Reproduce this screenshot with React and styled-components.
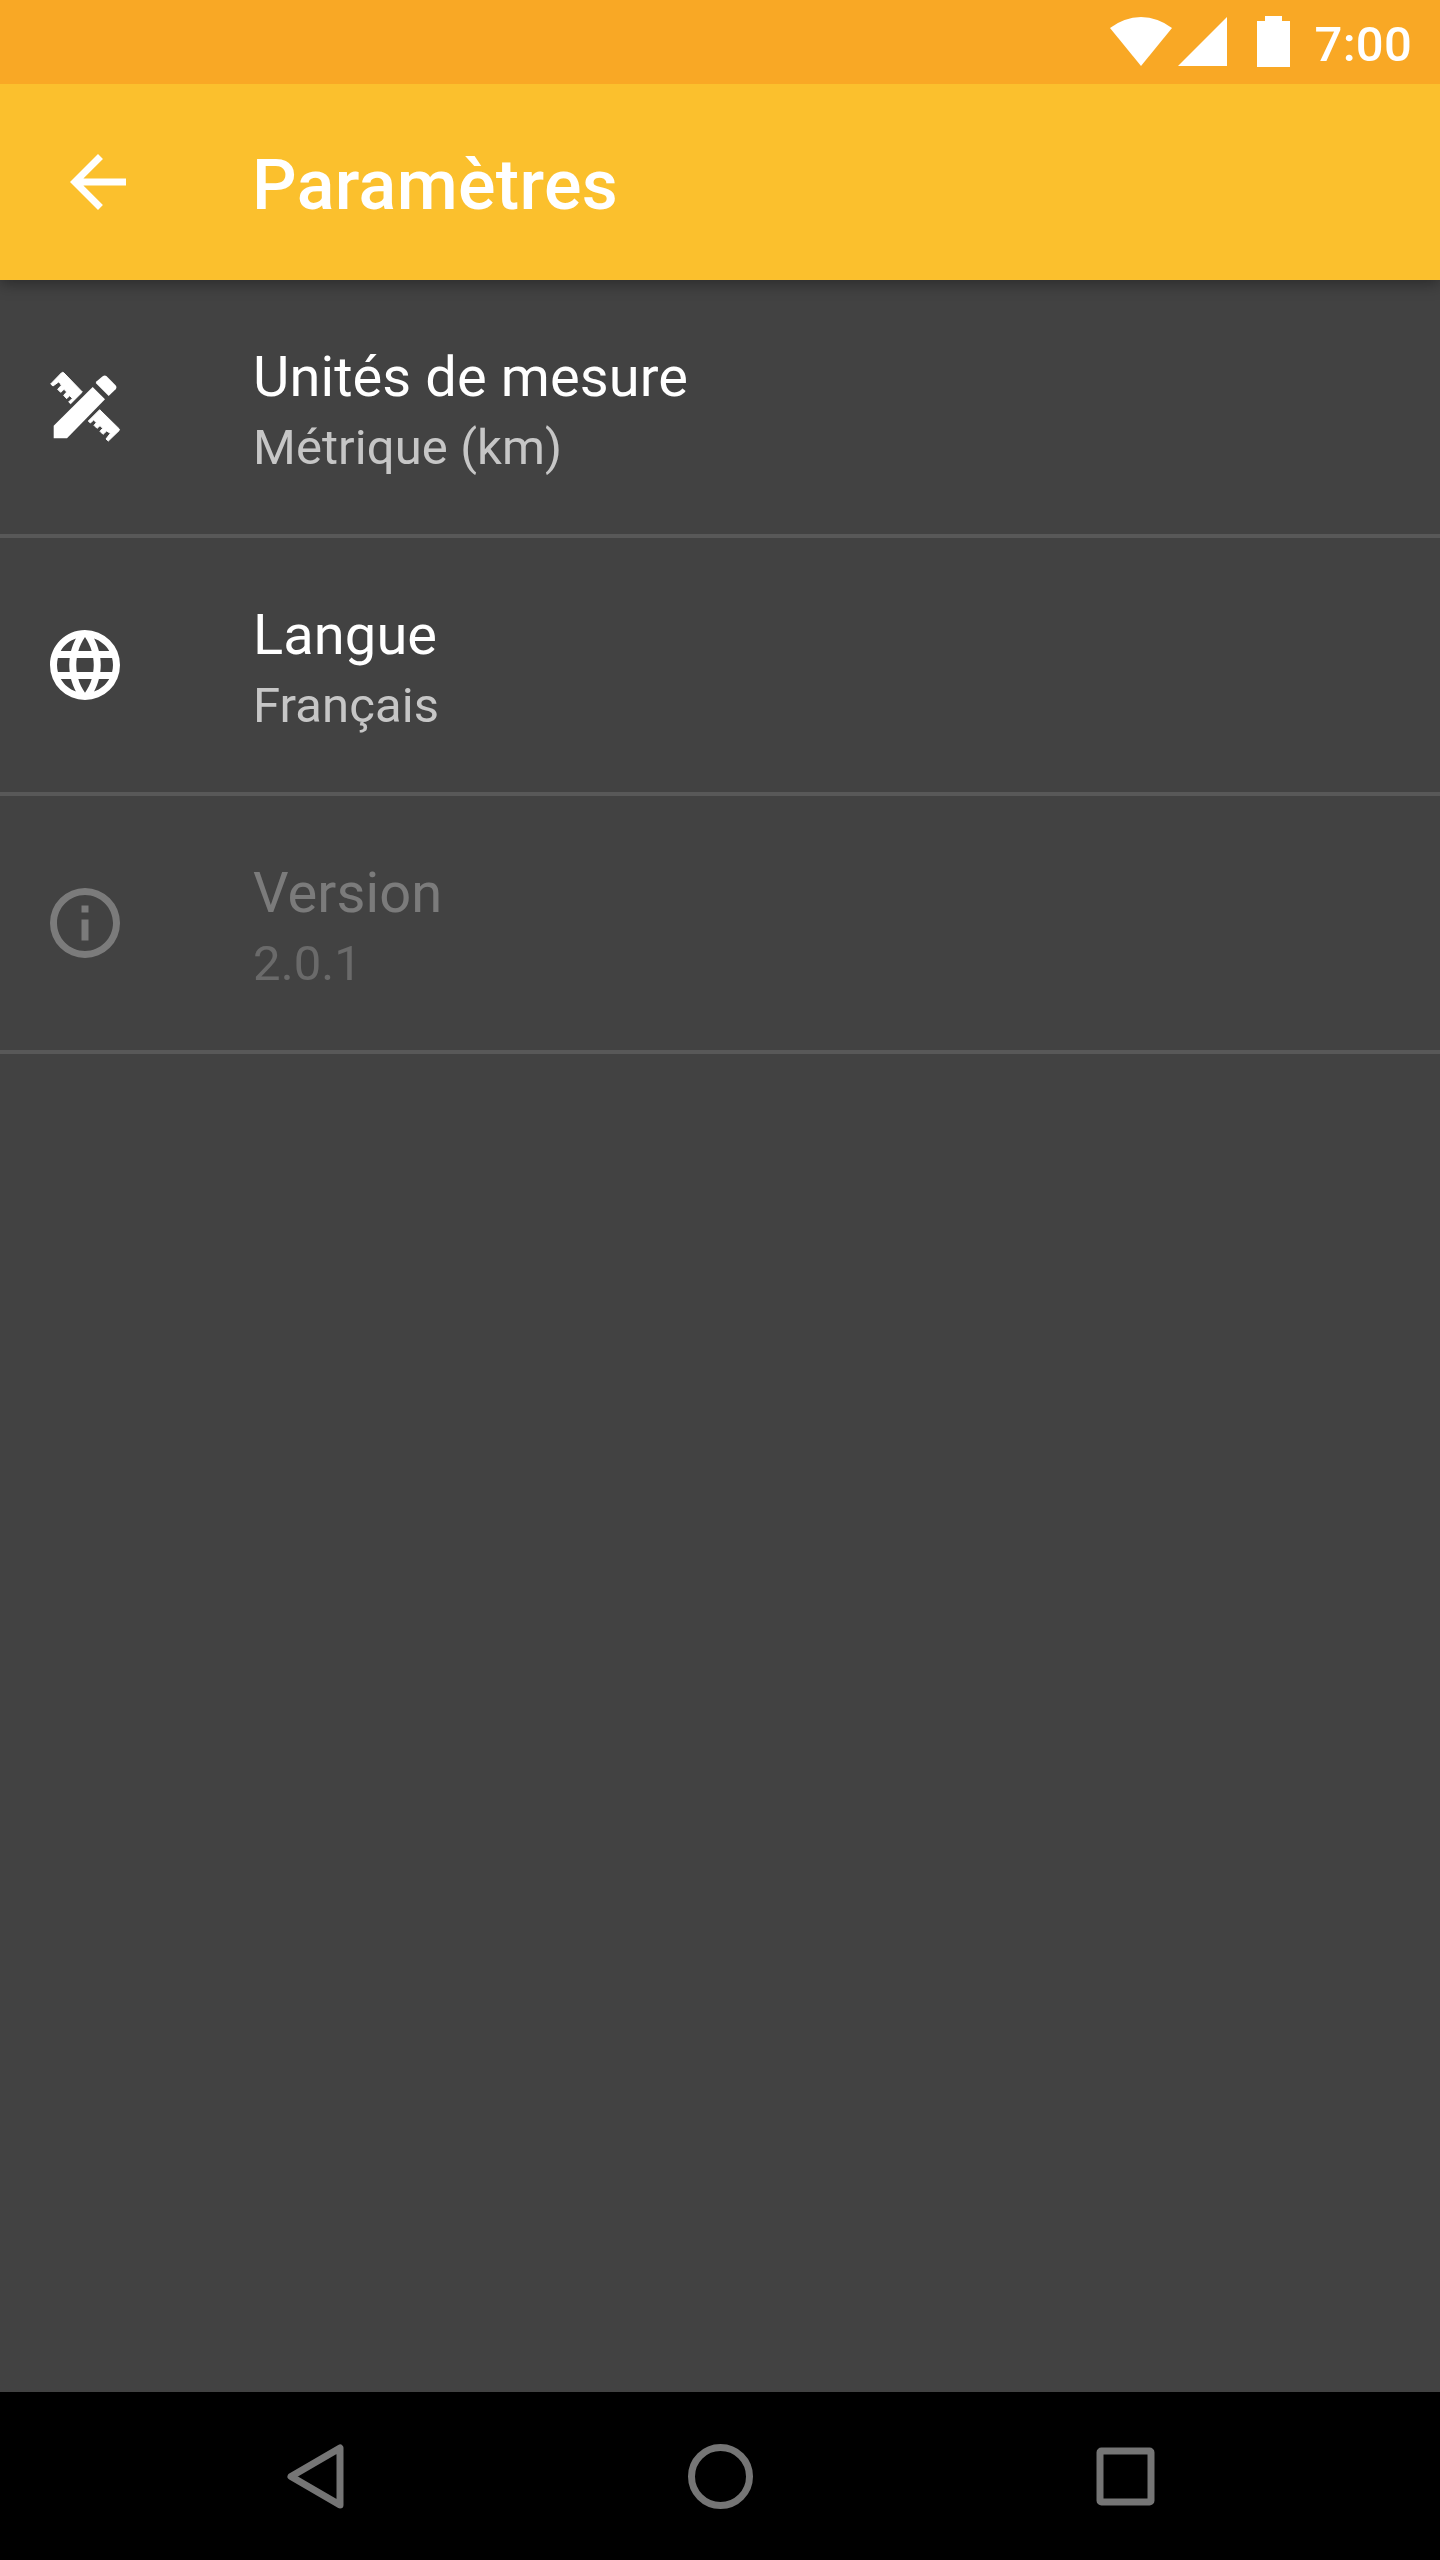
import React from "react";
import styled, { createGlobalStyle } from "styled-components";

const GlobalStyle = createGlobalStyle`
  body {
    margin: 0;
    background: #424242;
    font-family: Roboto, "Liberation Sans", sans-serif;
  }
`;

const Screen = styled.div`
  display: flex;
  flex-direction: column;
  width: 1440px;
  height: 2560px;
  overflow: hidden;
  background: #424242;
  color: #fff;
`;

const StatusBar = styled.header`
  display: flex;
  justify-content: flex-end;
  align-items: center;
  height: 84px;
  flex: none;
  padding-right: 28px;
  box-sizing: border-box;
  background: #f9a825;
  z-index: 2;
`;

const StatusIcons = styled.svg`
  display: block;
  width: 182px;
  height: 84px;
  margin-right: 24px;
  fill: #fff;
`;

const Clock = styled.time`
  font-size: 49px;
  line-height: 56px;
  font-weight: 500;
  padding-top: 5px;
  letter-spacing: 0.25px;
`;

const AppBar = styled.div`
  display: flex;
  align-items: center;
  height: 196px;
  flex: none;
  box-sizing: border-box;
  padding-left: 56px;
  background: #fbc02d;
  box-shadow: 0 4px 14px rgba(0, 0, 0, 0.35);
  z-index: 1;
`;

const BackButton = styled.button`
  width: 84px;
  height: 84px;
  padding: 0;
  border: 0;
  background: none;
  margin-right: 112px;
`;

const Icon = styled.svg`
  display: block;
  width: 84px;
  height: 84px;
  flex: none;
  fill: #fff;
`;

const Title = styled.h1`
  margin: 0;
  padding-top: 6px;
  font-size: 70px;
  line-height: 82px;
  font-weight: 500;
  letter-spacing: 0.35px;
`;

const List = styled.main`
  flex: 1;
`;

const Row = styled.section`
  display: flex;
  align-items: center;
  height: 258px;
  box-sizing: border-box;
  padding-left: 43px;
  border-bottom: 4px solid #585858;

  ${Icon} {
    margin-right: 125px;
    opacity: ${(p) => (p.$disabled ? 0.3 : 1)};
  }
`;

const RowText = styled.div`
  display: flex;
  flex-direction: column;
  gap: 1px;
  padding: 6px 0 0 1px;
  opacity: ${(p) => (p.$disabled ? 0.3 : 1)};
`;

const Label = styled.div`
  font-size: 56px;
  line-height: 74px;
  letter-spacing: 0.1px;
`;

const Value = styled.div`
  font-size: 49px;
  line-height: 66px;
  letter-spacing: 0.1px;
  color: rgba(255, 255, 255, 0.7);
`;

const NavBar = styled.nav`
  display: flex;
  justify-content: center;
  height: 168px;
  flex: none;
  background: #000;
`;

const NavButton = styled.button`
  display: flex;
  align-items: center;
  justify-content: center;
  width: 405px;
  padding: 0;
  border: 0;
  background: none;
`;

const NavIcon = styled.svg`
  width: 84px;
  height: 84px;
  fill: none;
  stroke: #757575;
  stroke-width: 7;
  stroke-linejoin: round;
`;

const ToolsIcon = () => (
  <Icon viewBox="39 45 252 252">
    <path d="M188 111L225 148L111 265H71V227Z" />
    <path d="M200 94L218 79Q224 74 230 79L256 105Q262 111 257 118L236 138L197 99Z" />
    <g stroke="#fff" strokeWidth="3" strokeLinejoin="round">
      <path d="M94 69Q98 65 102 69L157 126L122 161L116 156L127 145L119 137L110 146L101 136L110 126L102 118L92 127L83 118L94 106L87 95L69 108L62 102Z" />
      <path d="M209 179L267 236Q270 239 267 242L235 273L228 267L241 250L230 243L219 253L210 244L218 235L210 227L201 235L192 226L199 218L191 210L181 219L175 213Z" />
    </g>
  </Icon>
);

const GlobeIcon = () => (
  <Icon viewBox="0 0 24 24">
    <path d="M16.36,14C16.44,13.34 16.5,12.68 16.5,12C16.5,11.32 16.44,10.66 16.36,10H19.74C19.9,10.64 20,11.31 20,12C20,12.69 19.9,13.36 19.74,14M14.59,19.56C15.19,18.45 15.65,17.25 15.97,16H18.92C17.96,17.65 16.43,18.93 14.59,19.56M14.34,14H9.66C9.56,13.34 9.5,12.68 9.5,12C9.5,11.32 9.56,10.65 9.66,10H14.34C14.43,10.65 14.5,11.32 14.5,12C14.5,12.68 14.43,13.34 14.34,14M12,19.96C11.17,18.76 10.5,17.43 10.09,16H13.91C13.5,17.43 12.83,18.76 12,19.96M8,8H5.08C6.03,6.34 7.57,5.06 9.4,4.44C8.8,5.55 8.35,6.75 8,8M5.08,16H8C8.35,17.25 8.8,18.45 9.4,19.56C7.57,18.93 6.03,17.65 5.08,16M4.26,14C4.1,13.36 4,12.69 4,12C4,11.31 4.1,10.64 4.26,10H7.64C7.56,10.66 7.5,11.32 7.5,12C7.5,12.68 7.56,13.34 7.64,14M12,4.03C12.83,5.23 13.5,6.57 13.91,8H10.09C10.5,6.57 11.17,5.23 12,4.03M18.92,8H15.97C15.65,6.75 15.19,5.55 14.59,4.44C16.43,5.07 17.96,6.34 18.92,8M12,2C6.47,2 2,6.5 2,12A10,10 0 0,0 12,22A10,10 0 0,0 22,12A10,10 0 0,0 12,2Z" />
  </Icon>
);

const InfoIcon = () => (
  <Icon viewBox="0 0 24 24">
    <path d="M11,9H13V7H11M12,20C7.59,20 4,16.41 4,12C4,7.59 7.59,4 12,4C16.41,4 20,7.59 20,12C20,16.41 16.41,20 12,20M12,2A10,10 0 0,0 2,12A10,10 0 0,0 12,22A10,10 0 0,0 22,12A10,10 0 0,0 12,2M11,17H13V11H11V17Z" />
  </Icon>
);

const settings = [
  { icon: ToolsIcon, label: "Unités de mesure", value: "Métrique (km)" },
  { icon: GlobeIcon, label: "Langue", value: "Français" },
  { icon: InfoIcon, label: "Version", value: "2.0.1", disabled: true },
];

export default function App() {
  return (
    <Screen>
      <GlobalStyle />
      <StatusBar>
        <StatusIcons viewBox="1109 0 182 84">
          <path d="M1110 28A49.500 49.500 0 0 1 1172 28L1141 66Z" />
          <path d="M1178 66H1227V17Z" />
          <path d="M1257 21H1265V16H1282V21H1290V67H1257Z" />
        </StatusIcons>
        <Clock>7:00</Clock>
      </StatusBar>
      <AppBar>
        <BackButton aria-label="Retour">
          <Icon viewBox="0 0 24 24">
            <path d="M20 11H7.83l5.59-5.59L12 4l-8 8 8 8 1.41-1.41L7.83 13H20v-2z" />
          </Icon>
        </BackButton>
        <Title>Paramètres</Title>
      </AppBar>
      <List>
        {settings.map(({ icon: Glyph, label, value, disabled }) => (
          <Row key={label} $disabled={disabled}>
            <Glyph />
            <RowText $disabled={disabled}>
              <Label>{label}</Label>
              <Value>{value}</Value>
            </RowText>
          </Row>
        ))}
      </List>
      <NavBar>
        <NavButton aria-label="Retour">
          <NavIcon viewBox="273 2434 84 84">
            <path d="M340 2448V2505L291 2476.500Z" />
          </NavIcon>
        </NavButton>
        <NavButton aria-label="Accueil">
          <NavIcon viewBox="678 2434 84 84">
            <circle cx="720.5" cy="2476.5" r="29" />
          </NavIcon>
        </NavButton>
        <NavButton aria-label="Applications récentes">
          <NavIcon viewBox="1083 2434 84 84">
            <rect x="1100" y="2451" width="51" height="51" rx="1.500" />
          </NavIcon>
        </NavButton>
      </NavBar>
    </Screen>
  );
}
